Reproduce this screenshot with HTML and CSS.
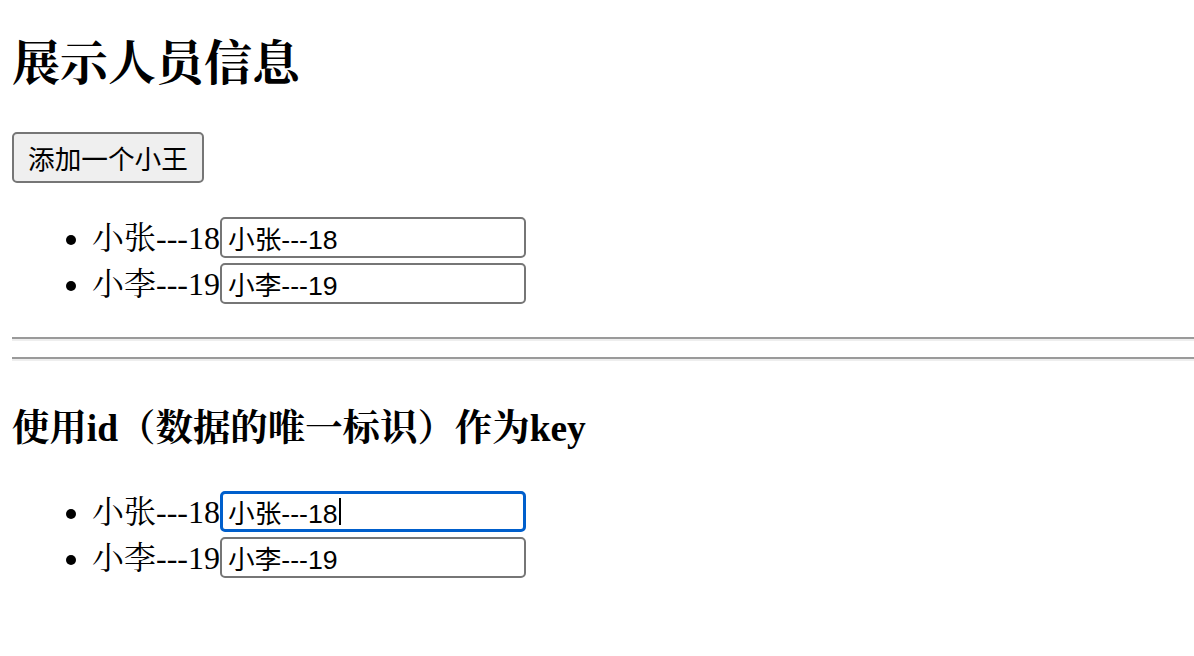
FILE: index.html
```html
<!DOCTYPE html>
<html lang="zh">
<head>
<meta charset="utf-8">
<title>key的作用</title>
<link rel="stylesheet" href="styles.css">
</head>
<body>
<div class="root">
  <h2 class="title">展示人员信息</h2>
  <button class="btn" type="button">添加一个小王</button>
  <ul class="list list-first">
    <li class="item">小张---18<input class="field" type="text" value="小张---18"></li>
    <li class="item">小李---19<input class="field" type="text" value="小李---19"></li>
  </ul>
  <hr class="rule">
  <hr class="rule">
  <h3 class="subtitle">使用id（数据的唯一标识）作为key</h3>
  <ul class="list">
    <li class="item">小张---18<span class="focus-wrap"><input class="field is-focused" type="text" value="小张---18"><span class="caret"></span></span></li>
    <li class="item">小李---19<input class="field" type="text" value="小李---19"></li>
  </ul>
</div>
</body>
</html>
```

FILE: styles.css
```css
html, body {
  margin: 0;
  padding: 0;
  background: #fff;
}
body {
  padding: 0 0 0 12px;
  color: #000;
  font-family: "Liberation Serif", "Noto Serif CJK SC", "Noto Sans CJK SC", serif;
  font-size: 32px;
}
.root {
  padding-top: 1px;
}
.title {
  font-size: 48px;
  font-weight: bold;
  margin: 24px 0 38px;
}
.btn {
  font-family: "Liberation Sans", "Noto Sans CJK SC", sans-serif;
  font-size: 26.67px;
  color: #000;
  background: #efefef;
  border: 2px solid #767676;
  border-radius: 5px;
  padding: 4px 14px 4px;
  margin: 0;
}
.list {
  margin: 29px 0 33px;
  padding-left: 80px;
}
.item {
  list-style: disc;
}
.field {
  box-sizing: border-box;
  width: 306px;
  height: 41px;
  font-family: "Liberation Sans", "Noto Sans CJK SC", sans-serif;
  font-size: 26.67px;
  color: #000;
  background: #fff;
  border: 2px solid #767676;
  border-radius: 5px;
  padding: 2px 4px 2px 6px;
  margin: 0;
}
.is-focused {
  border-color: #005fcc;
  outline: 2px solid #005fcc;
  outline-offset: -3px;
}
.focus-wrap {
  position: relative;
  display: inline-block;
}
.caret {
  position: absolute;
  left: 119px;
  top: 7px;
  width: 2px;
  height: 27px;
  background: #000;
}
.rule {
  margin: 16px 0;
  border: 0;
  border-top: 2px solid #9a9a9a;
  border-bottom: 2px solid #eeeeee;
  height: 0;
}
.subtitle {
  font-size: 37.44px;
  font-weight: bold;
  margin: 37px 0 34px;
}
```
